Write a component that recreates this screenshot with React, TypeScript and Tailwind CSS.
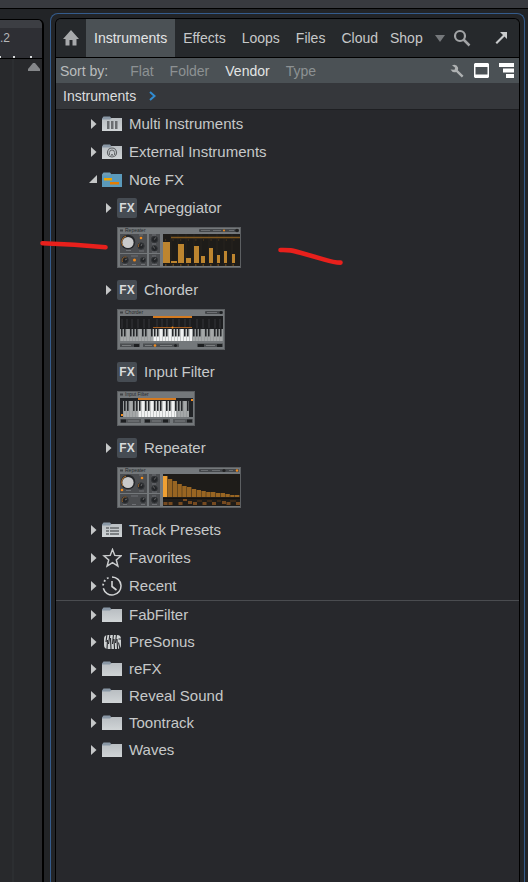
import type { ReactNode } from 'react'

const tabs = ['Instruments', 'Effects', 'Loops', 'Files', 'Cloud']
const sortModes = ['Flat', 'Folder', 'Vendor', 'Type']

/* ---------- icons ---------- */

function Folder({ blue = false, children }: { blue?: boolean; children?: ReactNode }) {
  return (
    <svg width="20" height="16" viewBox="0 0 20 16" aria-hidden="true">
      <defs>
        <linearGradient id="folder-front" x1="0" y1="0" x2="0" y2="1">
          <stop offset="0" stopColor="#b9bec2" />
          <stop offset="1" stopColor="#d0d4d6" />
        </linearGradient>
      </defs>
      <path d="M0 15V2.500L1.500.500H8L9.500 2.500V6H0z" fill={blue ? '#6f9db5' : '#8997a5'} />
      <path d="M0 3.500H8L9.500 2H20V15H0z" fill={blue ? '#5b9abb' : 'url(#folder-front)'} />
      {children}
    </svg>
  )
}

function MultiIcon() {
  return (
    <Folder>
      <path d="M5 5h2.500v8H5zM9 5h2.500v8H9zM13 5h2.500v8H13z" fill="#6a6d70" />
    </Folder>
  )
}

function ExternalIcon() {
  return (
    <Folder>
      <circle cx="10" cy="8.500" r="4.500" fill="none" stroke="#5d6063" strokeWidth="1.200" />
      <path d="M7.500 11V8.500a2.500 2.500 0 0 1 5 0V11M8.500 12.500 10 10l1.500 2.500" fill="none" stroke="#66696c" />
    </Folder>
  )
}

function NoteFxIcon() {
  return (
    <Folder blue>
      <path d="M2 6h8v2.500H2z" fill="#f0a500" />
      <path d="M8 10h9v2.500H8z" fill="#e57c00" />
    </Folder>
  )
}

function PresetsIcon() {
  return (
    <Folder>
      <path
        d="M4 5h3v2H4zM8 5h9v2H8zM4 8h3v2H4zM8 8h9v2H8zM4 11h3v2H4zM8 11h9v2H8z"
        fill="#7b7f82"
      />
    </Folder>
  )
}

function StarIcon() {
  return (
    <svg width="20" height="20" viewBox="0 0 20 20" aria-hidden="true">
      <path
        d="M10.500 1.500 12.800 7.400 19 7.800 14.300 11.900 15.900 18.100 10.500 14.700 5.100 18.100 6.700 11.900 2 7.800 8.200 7.400z"
        fill="none"
        stroke="#c9cbcc"
        strokeWidth="1.500"
      />
    </svg>
  )
}

function RecentIcon() {
  return (
    <svg width="20" height="20" viewBox="0 0 20 20" fill="none" stroke="#d2d4d5" aria-hidden="true">
      <path d="M10 1a9 9 0 1 1-8.700 11.300" strokeWidth="1.500" />
      <path d="M1.100 9.500A9 9 0 0 1 7.500 1.400" strokeWidth="1.800" strokeDasharray="1.800 2.200" />
      <path d="M10 5v5.500l4.500 3.500" strokeWidth="1.600" />
    </svg>
  )
}

function PreSonusIcon() {
  return (
    <svg width="20" height="16" viewBox="0 0 20 16" aria-hidden="true">
      <rect x="2" y="1" width="17" height="14" rx="4" fill="#cfd2d3" />
      <path
        d="M5 0 4 8M5.500 6 5 15M8 0 6.500 10M8.500 4 9 15M11.500 0 10.500 10M12 5l.5 10M14.500 0 13.500 9M15 5l.5 10M19 5h-2.500M16.500 8.500 18 15"
        stroke="#27282c"
        strokeWidth="1.100"
        fill="none"
      />
    </svg>
  )
}

function FxIcon() {
  return (
    <span className="flex h-5 w-5 items-center justify-center rounded-xs bg-[#464c53] text-xs font-bold text-[#d9dbdc]">
      FX
    </span>
  )
}

/* ---------- plug-in previews ---------- */

function Knobs() {
  return (
    <>
      <path d="M3 7h27v19H3zM3 27h27v12H3zM32 7h11v19H32zM32 27h11v12H32z" fill="#4b4d50" />
      <circle cx="11" cy="15" r="7.300" fill="#25272a" />
      <path d="M6 19a6.500 6.500 0 0 1 3-10" fill="none" stroke="#b9762c" />
      <circle cx="11" cy="15.500" r="5.600" fill="#c9cacb" />
      <g fill="#232528" stroke="#34373a">
        <circle cx="24" cy="19" r="3.200" />
        <circle cx="37.500" cy="12.500" r="3.200" />
        <circle cx="37.500" cy="21.500" r="2.800" />
        <circle cx="8" cy="33" r="3.300" />
        <circle cx="26" cy="33" r="2.600" />
        <circle cx="37.500" cy="33" r="3" />
      </g>
      <path d="M21.500 20a3 3 0 0 1 1-3.500M5.500 35a3.500 3.500 0 0 1 4-5" fill="none" stroke="#a5692a" strokeWidth=".8" />
      <path d="m24 19 1-2M37.500 12.500l1-2M37.500 21.500l-1-2M8 33l2-1M26 33l1-2M37.500 33l1-2" stroke="#999" strokeWidth=".6" />
      <path d="M9 23.500h5M22 8h4M22 24h5M35 8h4M35 17h4M35 25h5M14 29h7M6 37.500h4M15 37.500h4M24 37.500h4M35 29h4M35 37.500h5" stroke="#777a7d" strokeWidth=".8" />
    </>
  )
}

function Frame({ title, width, height = 41, children }: { title: string; width: number; height?: number; children: ReactNode }) {
  return (
    <svg width={width} height={height} viewBox={`0 0 ${width} ${height}`} role="img" aria-label={title}>
      <rect width={width} height={height} fill="#5c5f62" />
      <rect x="1" y="1" width={width - 2} height={height - 2} fill="#74787b" />
      <path d="M3 2.500h3v2H3z" fill="#404346" />
      <text x="8" y="5" fontSize="5" fill="#26282b">
        {title}
      </text>
      {children}
    </svg>
  )
}

const arpBars = [
  [46, 7, 15], [54, 6, 34], [61, 6, 17], [69, 5, 31], [77, 5, 19],
  [84, 4, 29], [92, 4, 21], [100, 3, 28], [107, 3, 24], [115, 3, 27],
]

function ArpPreview() {
  return (
    <Frame title="Repeater" width={124}>
      <Knobs />
      <rect x="82" y="2" width="40" height="3" rx="1" fill="#44474a" />
      <path d="M84 3.500h9M96 3.500h8M112 3.500h5" stroke="#74777a" strokeWidth=".8" />
      <circle cx="107" cy="3.500" r="1" fill="#f28c1d" />
      <circle cx="120" cy="3.500" r="1.800" fill="#222" />
      <circle cx="24" cy="11" r="1.300" fill="#f28c1d" />
      <circle cx="17.500" cy="33" r="1.500" fill="#f28c1d" />
      <rect x="46" y="7" width="77" height="32" fill="#1e1c19" />
      <path d="M54 7v32M61 7v32M69 7v32M77 7v32M84 7v32M92 7v32M100 7v32M107 7v32M115 7v32" stroke="#2c2822" strokeWidth=".6" />
      <path d="M54 10.500h69" stroke="#80571f" strokeWidth="1.500" />
      <path d="M48 13h74" stroke="#5e421d" strokeDasharray="1 6.600" />
      {arpBars.map(([x, w, y]) => (
        <rect key={x} x={x} y={y} width={w} height={36 - y} fill="#bd852f" />
      ))}
      <path d="M48 38h74" stroke="#986522" strokeDasharray="1.500 6" />
    </Frame>
  )
}

const repeaterTops = [9, 12, 14, 17, 19, 20, 22, 23, 24, 25, 25, 26, 26, 27, 28, 28]

function RepeaterPreview() {
  return (
    <Frame title="Repeater" width={124}>
      <Knobs />
      <rect x="82" y="2" width="40" height="3" rx="1" fill="#44474a" />
      <path d="M84 3.500h7M95 3.500h8M112 3.500h4" stroke="#74777a" strokeWidth=".8" />
      <circle cx="107" cy="3.500" r="1.600" fill="#222" />
      <circle cx="120" cy="3.500" r="1.200" fill="#f28c1d" />
      <circle cx="25" cy="11" r="1.300" fill="#f28c1d" />
      <circle cx="5" cy="23" r="1.300" fill="#f28c1d" />
      <rect x="46" y="7" width="77" height="32" fill="#1e1c19" />
      {repeaterTops.map((y, i) => (
        <rect key={i} x={46 + i * 4.8} y={y} width="4.400" height={30 - y} fill={i === 0 ? '#efa033' : '#986522'} />
      ))}
      <path d="M46 31.500h77" stroke="#15110d" />
      <path
        d="M46.500 35h4v3h-4zM51.500 35h4v3h-4zM61.500 35h4v3h-4zM66 32h4v2h-4zM71 34h4v3h-4zM76 35h4v3h-4zM85.500 35h4v3h-4zM95 35h4v3h-4zM105 34h4v3h-4zM109.500 35h4v3h-4zM119 35h4v3h-4z"
        fill="#764a20"
      />
      <path d="M80 34h5M90 34h5M100 34h4M113 34h6" stroke="#59391b" />
    </Frame>
  )
}

// Keys are drawn as narrow columns, the active range is lit.
function Keys({ from, to, top, bottom, litFrom, litTo }: Record<'from' | 'to' | 'top' | 'bottom' | 'litFrom' | 'litTo', number>) {
  const keys: number[] = []
  for (let x = from; x < to; x += 3) keys.push(x)
  const mid = top + (bottom - top) * 0.62
  return (
    <>
      <rect x={from} y={top} width={to - from} height={bottom - top} fill="#a5a8a9" />
      <rect x={litFrom} y={top} width={litTo - litFrom} height={bottom - top} fill="#f1f2f2" />
      {keys.map((x, i) => (
        <g key={x}>
          <rect x={x} y={top} width=".4" height={bottom - top} fill="#85888a" />
          {i % 7 !== 2 && i % 7 !== 6 && <rect x={x + 1} y={top} width="1.600" height={mid - top} fill="#242629" />}
        </g>
      ))}
    </>
  )
}

function ChorderPreview() {
  return (
    <Frame title="Chorder" width={108}>
      <rect x="88" y="2" width="18" height="3" rx="1" fill="#44474a" />
      <path d="M90 3.500h10" stroke="#777a7d" strokeWidth=".8" />
      <circle cx="104" cy="3.500" r="1.500" fill="#1d1f21" />
      <rect x="3" y="7" width="103" height="25" fill="#1c1d1f" />
      <path d="M5 10v9M10 10v9M15 10v9M21 10v9M27 10v9M32 10v9M40 10v9M45 10v9M50 10v9M56 10v9M62 10v9M68 10v9M73 10v9M80 10v9M86 10v9M92 10v9M98 10v9M103 10v9" stroke="#34363a" />
      <rect x="36" y="7" width="39" height="2" fill="#d47a20" />
      <path d="M36 18.500h39" stroke="#a15d22" />
      <Keys from={3} to={106} top={20} bottom={32} litFrom={36} litTo={75} />
      <circle cx="55.500" cy="18.500" r="1" fill="#f28c1d" />
      <path d="M3 34.500h20v3.500H3zM26 34.500h36v3.500H26zM80 34.500h26v3.500H80z" fill="#4b4e51" />
      <path d="M17 35h5v3h-5zM81 35h6v3h-6zM100 35h5v3h-5z" fill="#1d1f21" />
      <path d="M5 36.500h9M28 36.500h7M43 36.500h12M89 36.500h9" stroke="#85888a" strokeWidth=".8" />
      <circle cx="38" cy="36.500" r="1.300" fill="#f28c1d" />
      <circle cx="58.500" cy="36.500" r="1.500" fill="#1d1f21" />
    </Frame>
  )
}

function InputFilterPreview() {
  return (
    <Frame title="Input Filter" width={78} height={35}>
      <rect x="3" y="7" width="73" height="19" fill="#222427" />
      <rect x="21" y="7" width="38" height="2" fill="#d47a20" />
      <Keys from={6} to={72} top={10} bottom={26} litFrom={21} litTo={59} />
      <path d="M4 23h2v2H4zM74 8h2v2h-2z" fill="#f28c1d" />
      <path d="M3 28h21v4H3zM27 28h26v4H27zM56 28h20v4H56z" fill="#54575a" />
      <path d="M4 28.500h5v3H4zM28 28.500h5v3h-5zM46 28.500h5v3h-5zM70 28.500h5v3h-5z" fill="#1d1f21" />
      <path d="M11 30h11M35 30h9M58 30h10" stroke="#85888a" strokeWidth=".8" />
    </Frame>
  )
}

/* ---------- browser tree ---------- */

type Item = { label: string; icon: ReactNode; open?: boolean }

const vendors: Item[] = [
  { label: 'FabFilter', icon: <Folder /> },
  { label: 'PreSonus', icon: <PreSonusIcon /> },
  { label: 'reFX', icon: <Folder /> },
  { label: 'Reveal Sound', icon: <Folder /> },
  { label: 'Toontrack', icon: <Folder /> },
  { label: 'Waves', icon: <Folder /> },
]

const noteFx = [
  { label: 'Arpeggiator', preview: <ArpPreview />, expandable: true },
  { label: 'Chorder', preview: <ChorderPreview />, expandable: true },
  { label: 'Input Filter', preview: <InputFilterPreview />, expandable: false },
  { label: 'Repeater', preview: <RepeaterPreview />, expandable: true },
]

function Arrow({ open = false }: { open?: boolean }) {
  return (
    <svg width="8" height="10" viewBox="0 0 8 10" className="shrink-0" aria-hidden="true">
      <path d={open ? 'M8 0v8H0z' : 'M2 0 7.500 5 2 10z'} fill="#c5c7c8" />
    </svg>
  )
}

function Row({ item, className = 'h-7' }: { item: Item; className?: string }) {
  return (
    <button type="button" aria-expanded={!!item.open} className={`flex w-full items-center pl-[33px] text-left ${className}`}>
      <Arrow open={item.open} />
      <span className="mr-[7px] ml-[5px] flex w-5 shrink-0">{item.icon}</span>
      <span>{item.label}</span>
    </button>
  )
}

function Tree() {
  return (
    <div className="text-[15px] leading-5 text-[#c6c8c9]">
      <ul>
        <li><Row item={{ label: 'Multi Instruments', icon: <MultiIcon /> }} /></li>
        <li><Row item={{ label: 'External Instruments', icon: <ExternalIcon /> }} /></li>
        <li>
          <Row item={{ label: 'Note FX', icon: <NoteFxIcon />, open: true }} />
          <ul>
            {noteFx.map((fx) => (
              <li key={fx.label}>
                <button type="button" className="flex h-7 w-full items-center pl-12 text-left">
                  <span className="flex w-[13px]">{fx.expandable && <Arrow />}</span>
                  <FxIcon />
                  <span className="pl-[7px]">{fx.label}</span>
                </button>
                <div className="flex pt-[5px] pb-2 pl-[61px]">{fx.preview}</div>
              </li>
            ))}
          </ul>
        </li>
        <li><Row item={{ label: 'Track Presets', icon: <PresetsIcon /> }} /></li>
        <li><Row item={{ label: 'Favorites', icon: <StarIcon /> }} /></li>
        <li><Row item={{ label: 'Recent', icon: <RecentIcon /> }} /></li>
      </ul>
      <ul className="border-t border-[#4a4c50]">
        {vendors.map((item) => (
          <li key={item.label}>
            <Row item={item} className="h-[27px]" />
          </li>
        ))}
      </ul>
    </div>
  )
}

/* ---------- panel header ---------- */

function TabBar() {
  return (
    <nav className="flex h-[39px] items-stretch border-b border-black bg-[#26292c] text-sm text-[#c6c8c9]">
      <button type="button" aria-label="Home" className="flex w-[30px] shrink-0 items-center justify-center">
        <svg width="16" height="16" viewBox="0 0 16 16" aria-hidden="true">
          <path d="M8 0 16 9H13.500V15.500H9.500V10h-3v5.500H2.500V9H0z" fill="#a7a9ab" />
        </svg>
      </button>
      {tabs.map((tab, i) => (
        <button key={tab} type="button" className={`px-2 ${i === 0 ? 'bg-[#4b5155] text-[#e4e5e6]' : ''}`}>
          {tab}
        </button>
      ))}
      <button type="button" className="flex items-center gap-3 pl-1">
        Shop
        <svg width="10" height="7" viewBox="0 0 10 7" aria-hidden="true">
          <path d="M0 0h10L5 7z" fill="#75787b" />
        </svg>
      </button>
      <button type="button" aria-label="Search" className="pl-2">
        <svg width="18" height="18" viewBox="0 0 18 18" fill="none" stroke="#a2a4a6" aria-hidden="true">
          <circle cx="7" cy="7" r="5" strokeWidth="2.200" />
          <path d="m10.500 10.500 6 6" strokeWidth="2.500" />
        </svg>
      </button>
      <button type="button" aria-label="Detach" className="ml-auto pr-3">
        <svg width="12" height="12" viewBox="0 0 12 12" aria-hidden="true">
          <path d="M5 0h7v7L9.500 4.500 2 12 .5 10.500 8 3z" fill="#c9cbcc" />
        </svg>
      </button>
    </nav>
  )
}

function SortBar() {
  return (
    <div className="flex h-[25px] items-center gap-4 bg-[#4b5155] pr-[5px] pl-1 text-sm text-[#8d9193]">
      <span className="mr-1.5 text-[#b9bcbd]">Sort by:</span>
      {sortModes.map((mode) => (
        <button key={mode} type="button" className={mode === 'Vendor' ? 'text-[#e2e4e4]' : ''}>
          {mode}
        </button>
      ))}
      <div className="ml-auto flex items-center gap-2.5">
        <button type="button" aria-label="Options">
          <svg width="14" height="14" viewBox="0 0 14 14" aria-hidden="true">
            <path
              d="M2 1.200Q6.500-.5 8 3.500Q8.300 5 7.800 6.200L13.500 11.800 11.800 13.500 6.200 8Q2.500 9 .5 5.500L4.500 5.800 5.200 3.800z"
              fill="#aeb1b2"
            />
          </svg>
        </button>
        <button type="button" aria-label="Show previews">
          <svg width="15" height="15" viewBox="0 0 15 15" aria-hidden="true">
            <path d="M1 0h13l1 1v13l-1 1H1l-1-1V1zM1.500 4v7.500h12V4z" fill="#fff" fillRule="evenodd" />
          </svg>
        </button>
        <button type="button" aria-label="Tree view">
          <svg width="15" height="15" viewBox="0 0 15 15" aria-hidden="true">
            <path d="M0 0h15v4H0zM4 5.500h11v4H4zM7 11h8v4H7z" fill="#fff" />
          </svg>
        </button>
      </div>
    </div>
  )
}

function Ruler() {
  return (
    <div className="mt-2.5 flex w-11 shrink-0 flex-col overflow-hidden rounded-tr-md border-t border-r-2 border-black bg-[#28292c]">
      <div className="h-2 bg-[#3c3e43]" />
      <div className="h-[31px] border-b border-black bg-[#2e2f34] text-xs leading-5 text-[#b5b7b9]">
        .2
        <svg width="42" height="2" viewBox="0 0 42 2" className="mt-2 block" aria-hidden="true">
          <path d="M0 0h1v2H0zM13 0h2v2h-2zM30 0h2v2h-2z" fill="#d9dbdc" />
        </svg>
      </div>
      <div className="ml-3 flex flex-1 justify-end border-l-2 border-[#2c2e31] pt-1 pr-0.5">
        <svg width="12" height="8" viewBox="0 0 12 8" aria-hidden="true">
          <path d="M5 0h2l5 6v2H0V6z" fill="#85878a" />
        </svg>
      </div>
    </div>
  )
}

// Freehand pen marks lying over the window
function Markup() {
  return (
    <svg className="pointer-events-none absolute top-[235px] left-0" width="360" height="36" viewBox="0 0 360 36" aria-hidden="true">
      <g fill="none" stroke="#e8201c" strokeWidth="4.600" strokeLinecap="round">
        <path d="M42.500 8.200C66 9 82 10 105.500 12.300" />
        <path d="M280.500 15c9-.2 11 .3 20 2.800l24 6.800c7 2.200 10 3 16 3" />
      </g>
    </svg>
  )
}

export default function App() {
  return (
    <div className="relative flex min-h-screen flex-col bg-[#222427] font-['Liberation_Sans',Arial,sans-serif]">
      <div className="h-[9px] shrink-0 border-b border-black bg-[#383a3f]" />
      <div className="flex flex-1">
        <Ruler />
        <main className="mt-1 mr-[3px] ml-1.5 flex min-w-0 flex-1 flex-col rounded-t-lg border border-b-0 border-[#355c8c] px-1 pt-1">
          <section className="flex flex-1 flex-col overflow-hidden rounded-t-md border border-b-0 border-black bg-[#27282c]">
            <TabBar />
            <SortBar />
            <div className="flex h-[27px] items-center gap-3 border-b border-[#1e1f22] bg-[#35373b] pl-[7px] text-sm text-[#dcddde]">
              <a href="#instruments">Instruments</a>
              <svg width="8" height="10" viewBox="0 0 8 10" fill="none" stroke="#318bd0" strokeWidth="2" aria-hidden="true">
                <path d="m2 1 4.500 4L2 9" />
              </svg>
            </div>
            <Tree />
          </section>
        </main>
      </div>
      <Markup />
    </div>
  )
}
